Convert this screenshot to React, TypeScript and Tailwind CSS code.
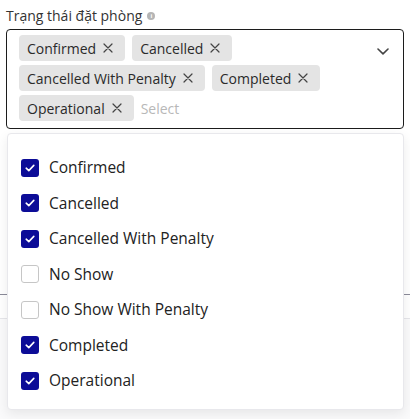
import React from 'react';

const tags = ['Confirmed', 'Cancelled', 'Cancelled With Penalty', 'Completed', 'Operational'];

const options = [
  { label: 'Confirmed', checked: true },
  { label: 'Cancelled', checked: true },
  { label: 'Cancelled With Penalty', checked: true },
  { label: 'No Show', checked: false },
  { label: 'No Show With Penalty', checked: false },
  { label: 'Completed', checked: true },
  { label: 'Operational', checked: true },
];

const CloseIcon = () => (
  <svg width="10" height="10" viewBox="0 0 10 10" className="text-[#444]">
    <path d="M1 1L9 9M9 1L1 9" stroke="currentColor" strokeWidth="1.2" strokeLinecap="round" />
  </svg>
);

const Checkbox = ({ checked }: { checked: boolean }) =>
  checked ? (
    <span className="flex h-[18px] w-[18px] items-center justify-center rounded-[3px] bg-[#0c0c97]">
      <svg width="10" height="8" viewBox="0 0 10 8">
        <path d="M1.2 4.2L3.8 6.6L8.8 1.4" fill="none" stroke="#fff" strokeWidth="1.6" strokeLinecap="round" strokeLinejoin="round" />
      </svg>
    </span>
  ) : (
    <span className="h-[18px] w-[18px] rounded-[3px] border border-[#c6c6c6] bg-white" />
  );

export default function App() {
  return (
    <div className="relative h-[419px] w-[410px] overflow-hidden bg-white font-['Open_Sans',sans-serif] text-[#222]">
      {/* background content under the menu */}
      <div className="absolute inset-x-0 top-[294px] h-px bg-[#8b8b99]" />
      <div className="absolute inset-x-0 top-[318px] bottom-0 border-t border-[#e6e6ea] bg-[#fafafb]" />

      <div className="relative px-[6px] pt-[5px]">
        <div className="mb-[4px] flex h-[20px] items-center gap-[5px] text-[14px] text-[#333]">
          <span>Trạng thái đặt phòng</span>
          <span className="mt-[1px] flex h-[8px] w-[8px] items-center justify-center rounded-full bg-[#b5b5b5] text-[6px] font-bold leading-none text-white">
            i
          </span>
        </div>

        <div className="relative">
          <div className="flex h-[100px] items-start rounded-[4px] border border-[#1c1c1c] bg-white pl-[12px] pr-[14px] pt-[5px]">
            <div className="flex flex-1 flex-wrap gap-x-[7px] gap-y-[4px]">
              {tags.map((t) => (
                <span
                  key={t}
                  className="flex h-[26px] items-center rounded-[4px] bg-[#e4e4e4] pl-[8px] pr-[12px] text-[14px] text-[#2a2a2a]"
                >
                  {t}
                  <span className="ml-[7px] flex items-center">
                    <CloseIcon />
                  </span>
                </span>
              ))}
              <span className="flex h-[26px] items-center text-[14px] text-[#b8b8b8]">Select</span>
            </div>
            <svg width="12" height="7" viewBox="0 0 12 7" className="mt-[13px] text-[#444]">
              <path d="M1 1L6 5.8L11 1" fill="none" stroke="currentColor" strokeWidth="1.6" strokeLinecap="round" strokeLinejoin="round" />
            </svg>
          </div>

          <div className="absolute left-[1px] right-0 top-[104px] rounded-[4px] border border-[#e8e8ec] bg-white pb-[10px] pl-[13px] pt-[16px] shadow-[0_4px_12px_rgba(0,0,0,0.08)]">
            {options.map((o) => (
              <div key={o.label} className="flex h-[35.5px] items-center gap-[10px] text-[15.5px] text-[#222]">
                <Checkbox checked={o.checked} />
                <span>{o.label}</span>
              </div>
            ))}
          </div>
        </div>
      </div>
    </div>
  );
}
